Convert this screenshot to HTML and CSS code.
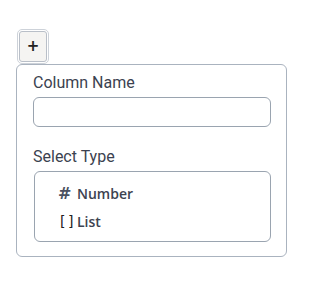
FILE: index.html
```html
<!DOCTYPE html>
<html>
<head>
<meta charset="utf-8">
<link rel="stylesheet" href="styles.css">
</head>
<body>
<div class="wrap">
  <button class="add-btn" type="button">+</button>
  <div class="panel">
    <label class="label">Column Name</label>
    <input class="text-input" type="text">
    <label class="label label-second">Select Type</label>
    <div class="select-box">
      <div class="option"><span class="opt-icon hash">#</span><span class="opt-text">Number</span></div>
      <div class="option"><span class="opt-icon brackets">[ ]</span><span class="opt-text">List</span></div>
    </div>
  </div>
</div>
</body>
</html>
```
FILE: styles.css
```css
html, body {
  margin: 0;
  padding: 0;
  background: #ffffff;
}
.wrap {
  padding: 29px 0 0 16px;
  width: 271px;
  display: flex;
  flex-direction: column;
  align-items: flex-start;
}
.add-btn {
  box-sizing: border-box;
  width: 28px;
  height: 31px;
  margin-left: 3px;
  margin-top: 2px;
  margin-bottom: 2px;
  padding: 0 0 1px 0;
  border: 1px solid #b9bfc8;
  border-radius: 3px;
  outline: 1px solid #cdd2d9;
  outline-offset: 1px;
  background: #f5f4f2;
  color: #222;
  font-family: "DejaVu Sans", sans-serif;
  font-weight: 700;
  font-size: 15px;
  line-height: 1;
  display: flex;
  align-items: center;
  justify-content: center;
}
.panel {
  box-sizing: border-box;
  width: 271px;
  border: 1px solid #aab3bf;
  border-radius: 6px;
  padding: 8px 16px 14px 16px;
  display: flex;
  flex-direction: column;
  background: #fff;
}
.label {
  font-family: Roboto, "Liberation Sans", sans-serif;
  font-size: 16px;
  line-height: 19px;
  color: #3b4250;
}
.text-input {
  box-sizing: border-box;
  margin-top: 5px;
  width: 238px;
  height: 30px;
  border: 1px solid #9aa4b0;
  border-radius: 6px;
  padding: 0 8px;
  outline: none;
}
.label-second {
  margin-top: 20px;
}
.select-box {
  box-sizing: border-box;
  margin-top: 5px;
  margin-left: 1px;
  width: 237px;
  height: 71px;
  border: 1px solid #9aa4b0;
  border-radius: 6px;
  padding: 7px 0 0 23px;
  display: flex;
  flex-direction: column;
}
.option {
  height: 28px;
  display: flex;
  align-items: center;
  gap: 6px;
  white-space: nowrap;
  font-family: "Open Sans", "Liberation Sans", sans-serif;
  font-weight: 600;
  font-size: 14px;
  color: #3d4350;
}
.hash {
  font-family: "DejaVu Sans", sans-serif;
  font-weight: 700;
  font-size: 16px;
  color: #4b5261;
  width: 13px;
}
.brackets {
  font-family: "DejaVu Sans", sans-serif;
  font-weight: 400;
  font-size: 14px;
  color: #222;
  margin-left: 2px;
  width: 11px;
  letter-spacing: -1px;
}
```
